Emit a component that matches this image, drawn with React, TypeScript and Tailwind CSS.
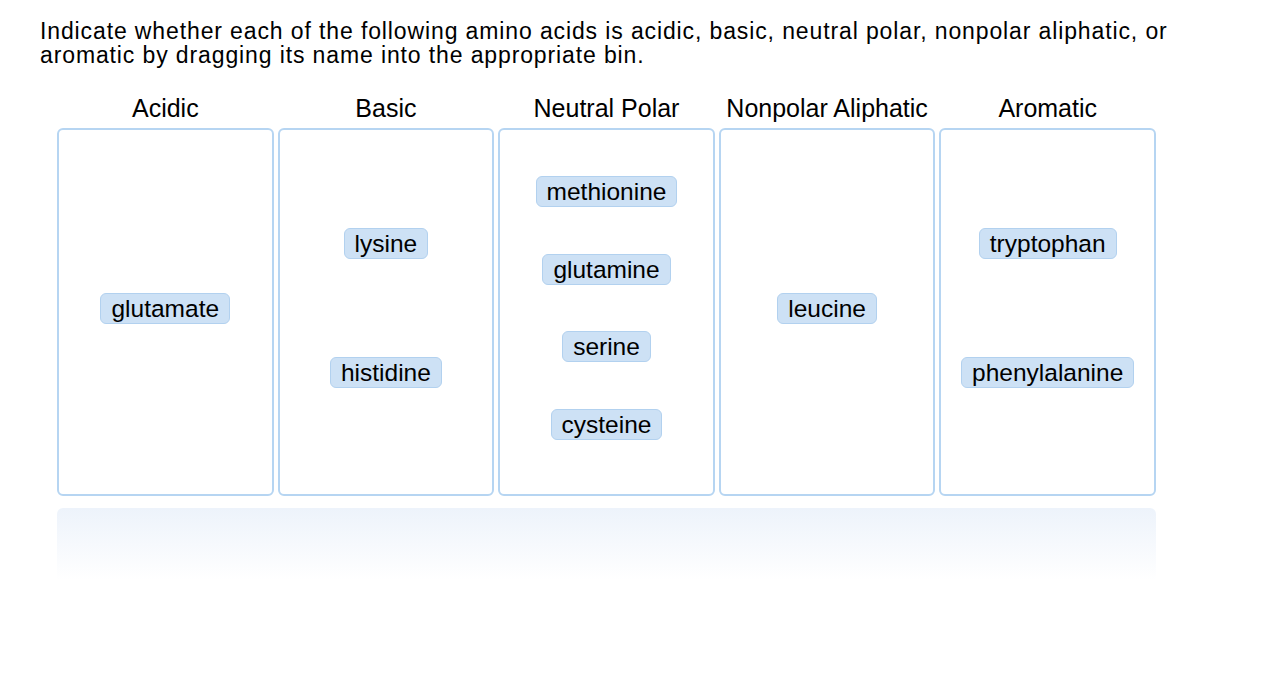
import React from "react";

const bins: { title: string; items: string[] }[] = [
  { title: "Acidic", items: ["glutamate"] },
  { title: "Basic", items: ["lysine", "histidine"] },
  { title: "Neutral Polar", items: ["methionine", "glutamine", "serine", "cysteine"] },
  { title: "Nonpolar Aliphatic", items: ["leucine"] },
  { title: "Aromatic", items: ["tryptophan", "phenylalanine"] },
];

export default function App() {
  return (
    <div
      className="w-[1262px] h-[680px] bg-white text-black pt-5 px-10"
      style={{ fontFamily: '"Liberation Sans", Arial, Helvetica, sans-serif' }}
    >
      <p className="text-[23px] leading-[23.5px] tracking-[0.88px] w-[1180px]">
        Indicate whether each of the following amino acids is acidic, basic, neutral polar, nonpolar aliphatic, or
        <br />
        aromatic by dragging its name into the appropriate bin.
      </p>
      <div className="ml-[17px] mt-[27px] w-[1099px]">
        <div className="grid grid-cols-5 gap-1">
          {bins.map((b) => (
            <div key={b.title} className="text-center text-[25px] leading-[28px]">
              {b.title}
            </div>
          ))}
        </div>
        <div className="grid grid-cols-5 gap-1 mt-1.5">
          {bins.map((b) => (
            <div
              key={b.title}
              className="h-[368px] border-2 border-[#b6d5f2] rounded-[6px] pb-2 flex flex-col items-center justify-evenly"
            >
              {b.items.map((it) => (
                <div
                  key={it}
                  className="h-[31px] px-[10px] rounded-[6px] bg-[#cde1f5] border border-[#b2d1ef] text-[24.5px] leading-[29px]"
                >
                  {it}
                </div>
              ))}
            </div>
          ))}
        </div>
        <div className="mt-3 h-[72px] rounded-t-[6px] bg-gradient-to-b from-[#edf3fb] to-white" />
      </div>
    </div>
  );
}
